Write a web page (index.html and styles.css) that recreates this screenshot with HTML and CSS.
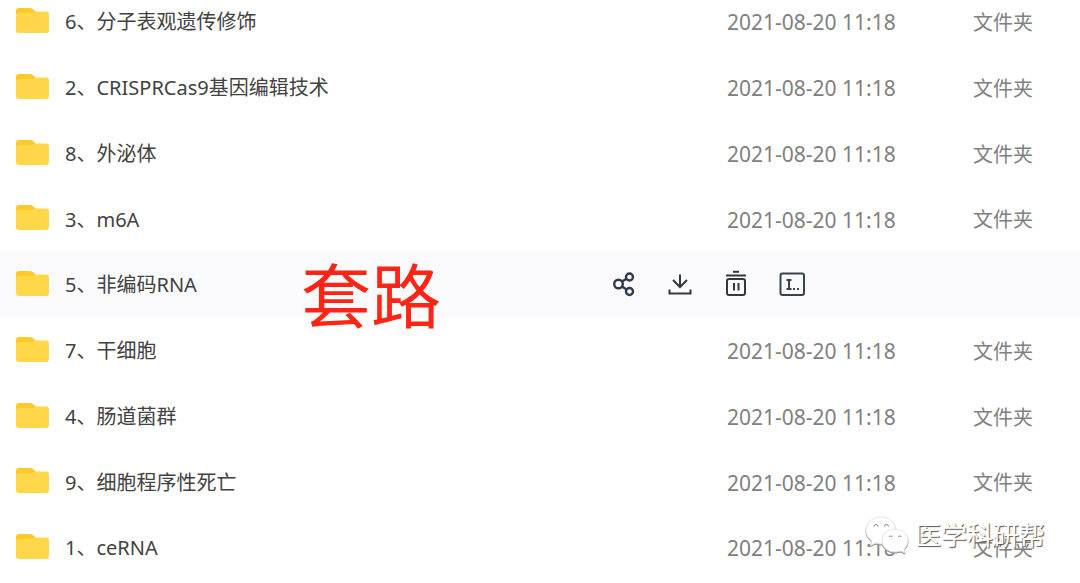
FILE: index.html
```html
<!DOCTYPE html>
<html lang="zh-CN">
<head>
<meta charset="utf-8">
<title>文件列表</title>
<link rel="stylesheet" href="styles.css">
</head>
<body>
<svg class="sprite" aria-hidden="true">
  <symbol id="folder" viewBox="0 0 33 25">
    <path d="M0 3Q0 0 3 0H14Q16 0 17.500 1.500L20 4V12H0Z" fill="#ffca28"/>
    <path d="M0 7Q0 5 3 5H16L19 3.500H30Q33 3.500 33 6.500V22Q33 25 30 25H3Q0 25 0 22Z" fill="#ffd748"/>
  </symbol>
</svg>
<main class="files">
  <table class="list">
    <colgroup><col><col class="col-actions"><col class="col-date"><col class="col-type"></colgroup>
    <tbody>
      <tr><td class="name"><span class="entry"><svg class="folder"><use href="#folder"/></svg>6、分子表观遗传修饰</span></td><td></td><td class="date">2021-08-20 11:18</td><td class="type">文件夹</td></tr>
      <tr><td class="name"><span class="entry"><svg class="folder"><use href="#folder"/></svg>2、CRISPRCas9基因编辑技术</span></td><td></td><td class="date">2021-08-20 11:18</td><td class="type">文件夹</td></tr>
      <tr><td class="name"><span class="entry"><svg class="folder"><use href="#folder"/></svg>8、外泌体</span></td><td></td><td class="date">2021-08-20 11:18</td><td class="type">文件夹</td></tr>
      <tr><td class="name"><span class="entry"><svg class="folder"><use href="#folder"/></svg>3、m6A</span></td><td></td><td class="date">2021-08-20 11:18</td><td class="type">文件夹</td></tr>
      <tr class="active"><td class="name"><span class="entry"><svg class="folder"><use href="#folder"/></svg>5、非编码RNA</span></td>
        <td colspan="3">
          <div class="actions">
            <button class="action" type="button" aria-label="分享"><svg viewBox="0 0 28 28" fill="none" stroke="#2f3a4e" stroke-width="2.400"><circle cx="8.500" cy="14" r="4.300"/><circle cx="19.500" cy="7" r="3.500"/><circle cx="19.500" cy="21.500" r="3.500"/><path d="M12 11.500 16.500 8.700M12 16.500 16.500 19.500"/></svg></button>
            <button class="action" type="button" aria-label="下载"><svg viewBox="0 0 28 28" fill="none" stroke="#333840" stroke-width="2"><path d="M14 4.500V17M7 10 14 17 21 10M3.500 19.500V23.500H24.500V19.500"/></svg></button>
            <button class="action" type="button" aria-label="删除"><svg viewBox="0 0 28 28" fill="none" stroke="#333840" stroke-width="2"><path d="M11 1.800H17M4 5.500H24M12 13V20.500M16.500 13V20.500"/><rect x="5" y="9" width="18" height="16" rx="2"/></svg></button>
            <button class="action" type="button" aria-label="重命名"><svg viewBox="0 0 28 28" fill="none" stroke="#3c424c" stroke-width="2"><rect x="2.500" y="3.500" width="23.500" height="21.500" rx="2"/><path d="M8.500 10H13.500M8.500 19H13.500M11 10V19M15 19H17M19 19H21"/></svg></button>
          </div>
        </td></tr>
      <tr><td class="name"><span class="entry"><svg class="folder"><use href="#folder"/></svg>7、干细胞</span></td><td></td><td class="date">2021-08-20 11:18</td><td class="type">文件夹</td></tr>
      <tr><td class="name"><span class="entry"><svg class="folder"><use href="#folder"/></svg>4、肠道菌群</span></td><td></td><td class="date">2021-08-20 11:18</td><td class="type">文件夹</td></tr>
      <tr><td class="name"><span class="entry"><svg class="folder"><use href="#folder"/></svg>9、细胞程序性死亡</span></td><td></td><td class="date">2021-08-20 11:18</td><td class="type">文件夹</td></tr>
      <tr><td class="name"><span class="entry"><svg class="folder"><use href="#folder"/></svg>1、ceRNA</span></td><td></td><td class="date">2021-08-20 11:18</td><td class="type">文件夹</td></tr>
    </tbody>
  </table>
  <div class="caption">套路</div>
  <div class="watermark">
    <svg class="wechat" viewBox="0 0 44 38" fill="#fff" stroke-linejoin="round">
      <path class="bubble" d="M16 1C7.500 1 1 7 1 14.500 1 19 3.500 22.500 7 25L5.500 29.500 11 27Q13.500 28 17 28C25 28 31 22 31 14.500 31 7 24.500 1 16 1Z"/>
      <path class="bubble" d="M30 13C22.500 13 17 18 17 24.500 17 31 22.500 36 30 36Q33 36 35.500 35L40 37 39 33C41.500 31 43 28 43 24.500 43 18 37.500 13 30 13Z"/>
      <g fill="none" stroke="#858585"><path d="M9 10.500A2 2 0 0 1 13 10.500M19.500 10.500A2 2 0 0 1 23.500 10.500M24 21A2 2 0 0 1 27.500 21M33 21A2 2 0 0 1 36.500 21"/></g>
    </svg>
    <span>医学科研帮</span>
  </div>
</main>
</body>
</html>
```
FILE: styles.css
```css
* { box-sizing: border-box; }

body {
  margin: 0;
  overflow: hidden;
  background: #fff;
  color: #424242;
  font: 20px/30px "Noto Sans", "Noto Sans CJK SC", sans-serif;
}

.sprite { position: absolute; width: 0; height: 0; }

/* The list is scrolled slightly past the top of its first row. */
.files { position: relative; margin-top: -12px; }

.list {
  width: 100%;
  table-layout: fixed;
  border-collapse: collapse;
}

.col-actions { width: 117px; }
.col-date { width: 246px; }
.col-type { width: 107px; }

.list tr { height: 66px; }
.list tr:nth-child(4n) { height: 65px; }
.list td { padding: 0; white-space: nowrap; }
.active { background: #fafafc; }

.list .name { padding: 2px 0 0 16px; }
.entry { display: flex; align-items: center; gap: 16px; }
.folder { width: 33px; height: 25px; margin-bottom: 4px; flex: none; }
.list .date { padding-top: 2px; color: #808080; font-size: 21px; }
.list .type { padding-top: 3px; color: #808080; }

.actions { display: flex; gap: 28px; }

.action {
  width: 28px;
  height: 28px;
  padding: 0;
  border: 0;
  background: none;
  cursor: pointer;
}
.action svg { display: block; width: 28px; height: 28px; }

.caption {
  position: absolute;
  top: 268px;
  left: 301px;
  color: #ff2414;
  font-size: 70px;
  line-height: 80px;
}

.watermark {
  position: absolute;
  right: 35px;
  bottom: 26px;
  display: flex;
  align-items: center;
  gap: 6px;
  color: #fff;
  font-size: 26px;
  line-height: 38px;
  text-shadow: 1px 1px 1px #555;
}
.wechat { width: 44px; height: 38px; overflow: visible; filter: drop-shadow(0 1px 0 #888); }
.bubble { stroke: #e4e4e4; stroke-width: 1; }
```
